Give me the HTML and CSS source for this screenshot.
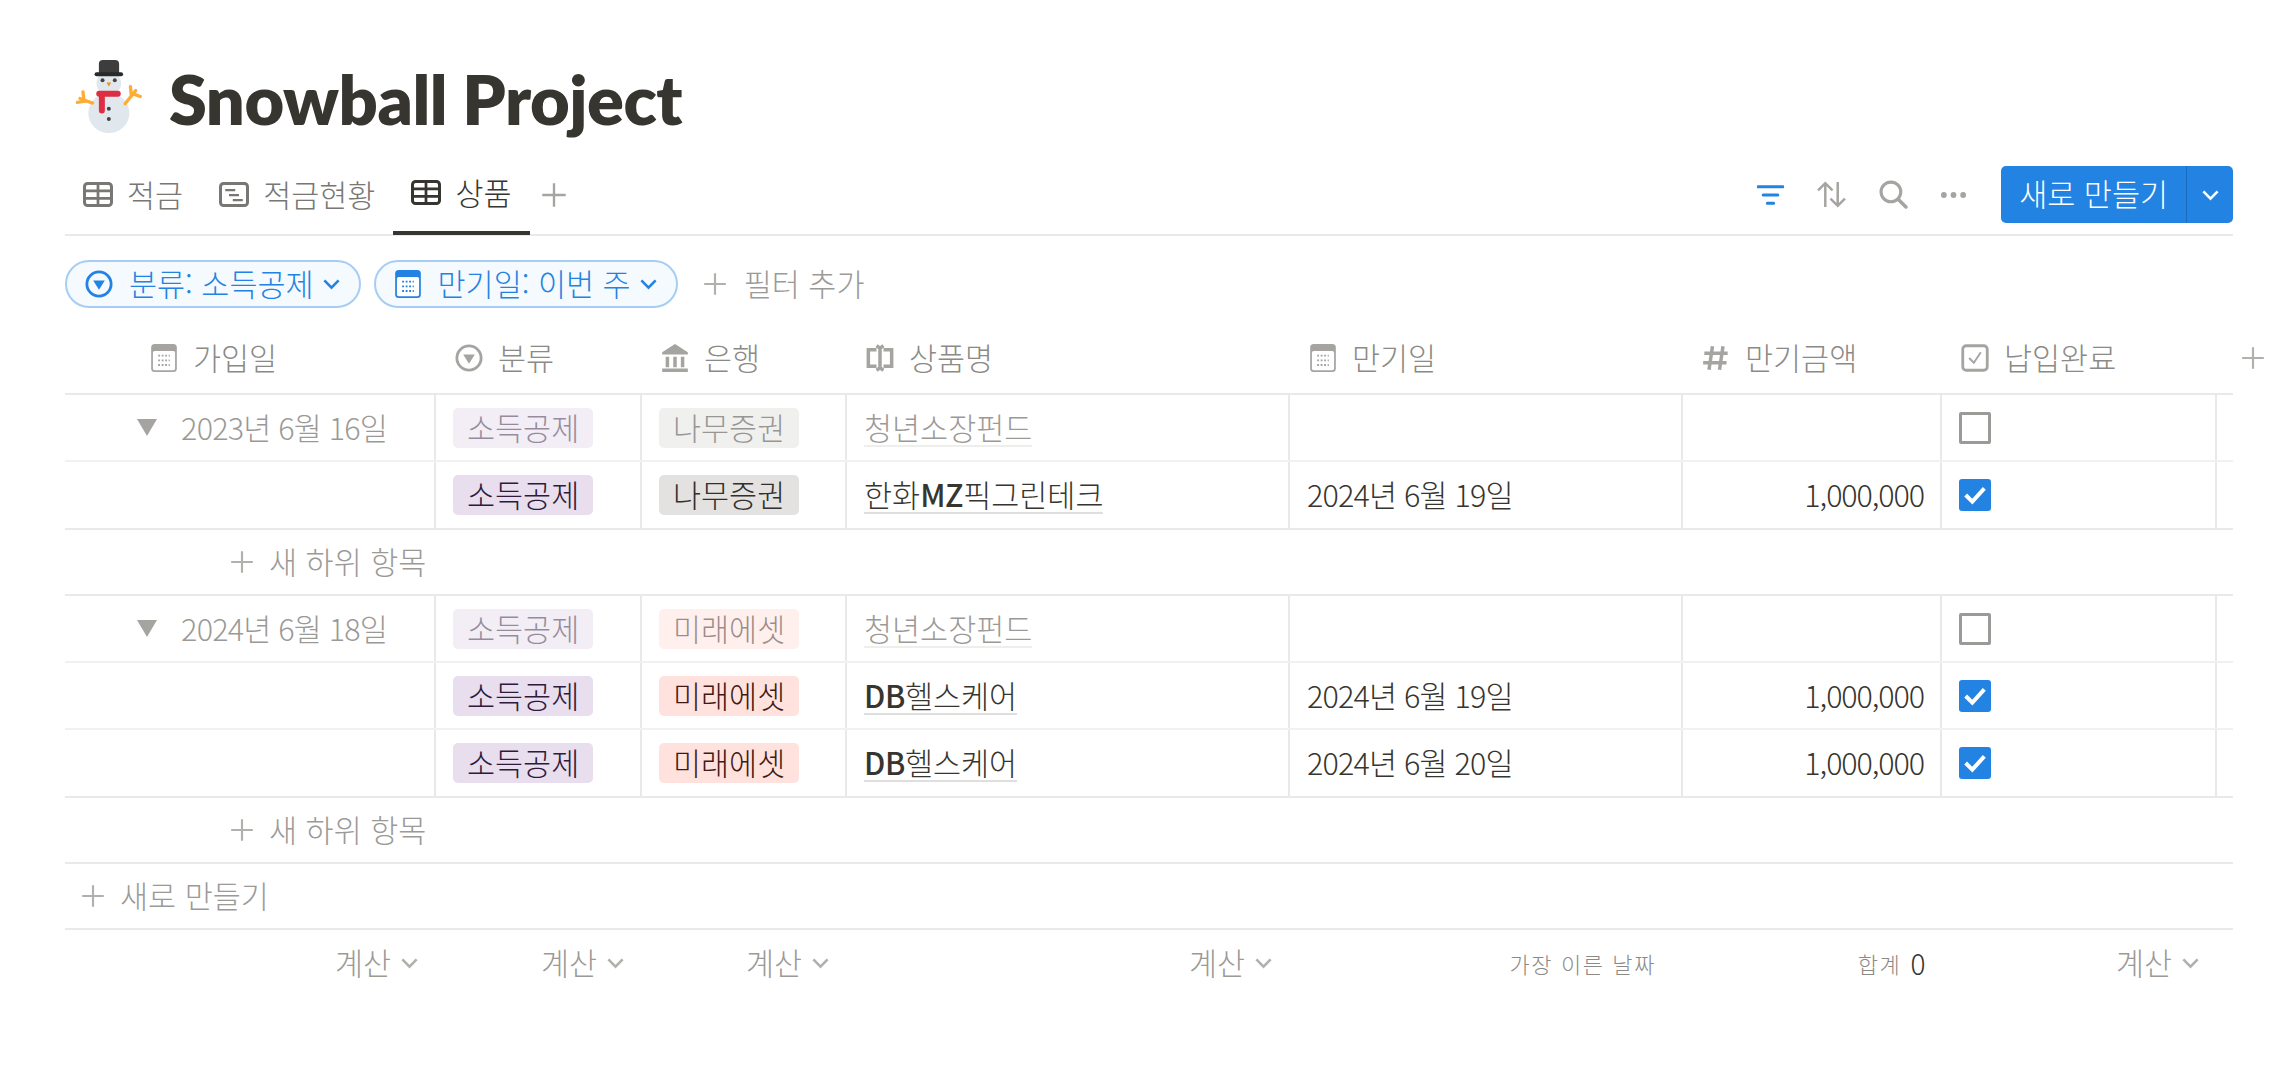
FILE: index.html
```html
<!DOCTYPE html>
<html lang="ko">
    <head>
        <meta charset="UTF-8">
        <title>Snowball Project</title>
        <link rel="stylesheet" href="styles.css">
    </head>

    <body>
        <svg class="defs" width="0" height="0">
            <symbol id="i-table" viewBox="0 0 24 20"><rect x="1.200" y="1.200" width="21.600" height="17.600" rx="2.500" fill="none" stroke="currentColor" stroke-width="2.400"/><path d="M1 7h22M1 13h22M12 1v18" stroke="currentColor" stroke-width="2.200"/></symbol>
            <symbol id="i-cal" viewBox="0 0 22 24"><rect width="22" height="24" rx="3" fill="currentColor"/><rect x="1.500" y="6" width="19" height="16.500" rx="1.500" fill="#fff"/><path d="M6 10h10M6 14h10M6 18h10" stroke="currentColor" stroke-width="1.600" stroke-dasharray="1.600 1.400"/></symbol>
            <symbol id="i-select" viewBox="0 0 24 24"><circle cx="12" cy="12" r="10.400" fill="none" stroke="currentColor" stroke-width="2.400"/><path d="M7 9h10l-5 8z" fill="currentColor"/></symbol>
            <symbol id="i-chev" viewBox="0 0 16 10"><path d="M2 2l6 6 6-6" fill="none" stroke="currentColor" stroke-width="2.200"/></symbol>
            <symbol id="i-plus" viewBox="0 0 20 20"><path d="M10 1v18M1 10h18" stroke="currentColor" stroke-width="1.800"/></symbol>
        </svg>

        <h1 class="title">
            <!-- snowman -->
            <svg class="snowman" viewBox="45 25 205 230">
                <ellipse cx="147" cy="190" rx="62" ry="60" fill="#e1e8ed"/>
                <circle cx="147" cy="100" r="37" fill="#e1e8ed"/>
                <path d="M117 72V42a12 12 0 0 1 12-12h37a12 12 0 0 1 12 12v30z" fill="#3d3d3d"/>
                <rect x="104" y="67" width="86" height="12" rx="6" fill="#292929"/>
                <circle cx="128" cy="91" r="6" fill="#444"/><circle cx="165" cy="91" r="6" fill="#444"/>
                <path d="M140 98h14l-7 12z" fill="#f4900c"/>
                <path d="M118 132h56M126 132v50" fill="none" stroke="#dd2e44" stroke-width="18" stroke-linecap="round"/>
                <circle cx="147" cy="177" r="6" fill="#444"/><circle cx="147" cy="208" r="6" fill="#444"/>
                <path d="M98 160L60 146M72 150l-3-24M80 153l-28 5M196 162l32-40M215 138l-3-28M220 132l22 8" fill="none" stroke="#ffac33" stroke-width="10" stroke-linecap="round"/>
            </svg>
            <span class="title-text">Snowball Project</span>
        </h1>

        <div class="tabbar">
            <div class="tab"><svg class="tab-icon"><use href="#i-table"/></svg>적금</div>
            <div class="tab">
                <svg class="tab-icon" viewBox="0 0 24 20"><rect x="1.200" y="1.200" width="21.600" height="17.600" rx="2.500" fill="none" stroke="currentColor" stroke-width="2.400"/><path d="M5 6.500h8M8 10.500h8M11 14.500h8" stroke="currentColor" stroke-width="1.800"/></svg>적금현황
            </div>
            <div class="tab tab-active"><svg class="tab-icon"><use href="#i-table"/></svg>상품</div>
            <svg class="tab-plus"><use href="#i-plus"/></svg>

            <div class="tools">
                <svg class="tool" viewBox="0 0 26 22"><path d="M1 3h24M6 11h14M10 19h6" stroke="#2383e2" stroke-width="3" stroke-linecap="round"/></svg>
                <svg class="tool tool-sort" viewBox="0 0 30 26"><path d="M9 25V2M2 9l7-7 7 7M21 1v23M14 17l7 7 7-7" fill="none" stroke="#a5a4a1" stroke-width="2.400"/></svg>
                <svg class="tool tool-search" viewBox="0 0 28 28"><circle cx="11.500" cy="11.500" r="9.500" fill="none" stroke="#a5a4a1" stroke-width="3"/><path d="M18.500 18.500L26 26" stroke="#a5a4a1" stroke-width="3.400" stroke-linecap="round"/></svg>
                <svg class="tool" viewBox="0 0 28 8"><circle cx="4" cy="4" r="3" fill="#a5a4a1"/><circle cx="14" cy="4" r="3" fill="#a5a4a1"/><circle cx="24" cy="4" r="3" fill="#a5a4a1"/></svg>
            </div>
            <div class="new-btn">
                <span class="new-label">새로 만들기</span>
                <span class="new-arrow"><svg class="chev"><use href="#i-chev"/></svg></span>
            </div>
        </div>

        <div class="filters">
            <div class="pill"><svg class="pill-icon"><use href="#i-select"/></svg>분류: 소득공제<svg class="chev"><use href="#i-chev"/></svg></div>
            <div class="pill"><svg class="pill-icon"><use href="#i-cal"/></svg>만기일: 이번 주<svg class="chev"><use href="#i-chev"/></svg></div>
            <div class="add-filter"><svg class="plus"><use href="#i-plus"/></svg>필터 추가</div>
        </div>

        <div class="row head">
            <div class="th th-first"><svg class="th-icon"><use href="#i-cal"/></svg>가입일</div>
            <div class="th"><svg class="th-icon"><use href="#i-select"/></svg>분류</div>
            <div class="th">
                <svg class="th-icon" viewBox="0 0 24 24"><path d="M12 0l11 7v2H1V7z" fill="currentColor"/><path d="M4 11h3v9H4zM10.500 11h3v9h-3zM17 11h3v9h-3zM1 21h22v3H1z" fill="currentColor"/></svg>은행
            </div>
            <div class="th">
                <svg class="th-icon" viewBox="0 0 24 24"><path d="M9 5H2v14h7M15 5h7v14h-7M12 2v20M9 1.500l3 2 3-2M9 22.500l3-2 3 2" fill="none" stroke="currentColor" stroke-width="3"/></svg>상품명
            </div>
            <div class="th"><svg class="th-icon"><use href="#i-cal"/></svg>만기일</div>
            <div class="th">
                <svg class="th-icon" viewBox="0 0 24 24"><path d="M9 2L6 22M18 2l-3 20M2 8h20M1 16h20" fill="none" stroke="currentColor" stroke-width="3"/></svg>만기금액
            </div>
            <div class="th">
                <svg class="th-icon" viewBox="0 0 24 24"><rect x="1.500" y="1.500" width="21" height="21" rx="3" fill="none" stroke="currentColor" stroke-width="2.400"/><path d="M7 12l4 4 6-9" fill="none" stroke="currentColor" stroke-width="1.600"/></svg>납입완료
            </div>
            <div class="th th-add"><svg class="plus"><use href="#i-plus"/></svg></div>
        </div>

        <!-- group 1 -->
        <div class="row parent">
            <div class="td td-first"><span class="tri"></span><span class="date dim">2023년 6월 16일</span></div>
            <div class="td"><span class="tag purple dim">소득공제</span></div>
            <div class="td"><span class="tag gray dim">나무증권</span></div>
            <div class="td"><span class="name dim">청년소장펀드</span></div>
            <div class="td"></div>
            <div class="td"></div>
            <div class="td"><span class="box"></span></div>
            <div></div>
        </div>
        <div class="row child last">
            <div class="td"></div>
            <div class="td"><span class="tag purple">소득공제</span></div>
            <div class="td"><span class="tag gray">나무증권</span></div>
            <div class="td"><span class="name">한화<b>MZ</b>픽그린테크</span></div>
            <div class="td"><span class="date">2024년 6월 19일</span></div>
            <div class="td td-num">1,000,000</div>
            <div class="td"><span class="box on"><svg viewBox="0 0 24 24"><path d="M5 12l5 5 9-10" fill="none" stroke="#fff" stroke-width="3"/></svg></span></div>
            <div></div>
        </div>
        <div class="line-row sub"><svg class="plus"><use href="#i-plus"/></svg>새 하위 항목</div>

        <!-- group 2 -->
        <div class="row parent">
            <div class="td td-first"><span class="tri"></span><span class="date dim">2024년 6월 18일</span></div>
            <div class="td"><span class="tag purple dim">소득공제</span></div>
            <div class="td"><span class="tag red dim">미래에셋</span></div>
            <div class="td"><span class="name dim">청년소장펀드</span></div>
            <div class="td"></div>
            <div class="td"></div>
            <div class="td"><span class="box"></span></div>
            <div></div>
        </div>
        <div class="row child">
            <div class="td"></div>
            <div class="td"><span class="tag purple">소득공제</span></div>
            <div class="td"><span class="tag red">미래에셋</span></div>
            <div class="td"><span class="name"><b>DB</b>헬스케어</span></div>
            <div class="td"><span class="date">2024년 6월 19일</span></div>
            <div class="td td-num">1,000,000</div>
            <div class="td"><span class="box on"><svg viewBox="0 0 24 24"><path d="M5 12l5 5 9-10" fill="none" stroke="#fff" stroke-width="3"/></svg></span></div>
            <div></div>
        </div>
        <div class="row child last">
            <div class="td"></div>
            <div class="td"><span class="tag purple">소득공제</span></div>
            <div class="td"><span class="tag red">미래에셋</span></div>
            <div class="td"><span class="name"><b>DB</b>헬스케어</span></div>
            <div class="td"><span class="date">2024년 6월 20일</span></div>
            <div class="td td-num">1,000,000</div>
            <div class="td"><span class="box on"><svg viewBox="0 0 24 24"><path d="M5 12l5 5 9-10" fill="none" stroke="#fff" stroke-width="3"/></svg></span></div>
            <div></div>
        </div>
        <div class="line-row sub"><svg class="plus"><use href="#i-plus"/></svg>새 하위 항목</div>
        <div class="line-row add-row"><svg class="plus"><use href="#i-plus"/></svg>새로 만들기</div>

        <div class="row calc">
            <div class="ft">계산<svg class="chev-sm"><use href="#i-chev"/></svg></div>
            <div class="ft">계산<svg class="chev-sm"><use href="#i-chev"/></svg></div>
            <div class="ft">계산<svg class="chev-sm"><use href="#i-chev"/></svg></div>
            <div class="ft">계산<svg class="chev-sm"><use href="#i-chev"/></svg></div>
            <div class="ft ft-small ft-date">가장 이른 날짜</div>
            <div class="ft ft-small">합계<span class="ft-val">0</span></div>
            <div class="ft">계산<svg class="chev-sm"><use href="#i-chev"/></svg></div>
            <div></div>
        </div>
    </body>
</html>
```

FILE: styles.css
```css
* {
    box-sizing: border-box;
    margin: 0;
    padding: 0;
}
body {
    padding: 0 49px 0 65px;
    background-color: #fff;
    color: #37352f;
    font-family: "Noto Sans CJK KR", "Noto Sans", sans-serif;
    font-size: 30.500px;
    font-weight: 300;
    line-height: 1.3;
    overflow: hidden;
}
.defs {
    position: absolute;
}
.title {
    display: flex;
    align-items: center;
    gap: 26px;
    height: 166px;
    padding: 46px 0 20px 10px;
    font-family: "Lato", "Noto Sans", sans-serif;
    font-size: 68.500px;
    font-weight: 800;
    letter-spacing: -0.5px;
}
.title-text {
    padding-top: 6px;
}
.snowman {
    width: 68px;
    height: 77px;
}

/* tabs */
.tabbar {
    display: flex;
    align-items: center;
    height: 70px;
    border-bottom: 2px solid #e9e9e7;
    color: #787774;
}
.tab {
    display: flex;
    align-items: center;
    gap: 14px;
    height: 70px;
    padding: 0 18px 11px;
    white-space: nowrap;
}
.tab-icon {
    width: 30px;
    height: 25px;
}
.tab-active {
    border-bottom: 4px solid #37352f;
    color: #37352f;
}
.tab-plus {
    width: 26px;
    height: 26px;
    margin: 0 0 11px 11px;
    color: #a5a4a1;
}
.tools {
    display: flex;
    align-items: center;
    gap: 32px;
    margin: 0 34px 11px auto;
}
.tool {
    width: 27px;
    height: 26px;
}
.tool-sort {
    width: 31px;
    height: 29px;
}
.tool-search {
    width: 29px;
    height: 29px;
}
.new-btn {
    display: flex;
    height: 57px;
    margin-bottom: 11px;
    border-radius: 5px;
    background-color: #2383e2;
    color: #fff;
    line-height: 55px;
    white-space: nowrap;
}
.new-label {
    padding: 0 18px;
    border-right: 1px solid #1b6cc0;
}
.new-arrow {
    display: flex;
    align-items: center;
    justify-content: center;
    width: 46px;
}
.chev {
    width: 19px;
    height: 12px;
}

/* filters */
.filters {
    display: flex;
    align-items: center;
    gap: 13px;
    height: 87px;
    padding-top: 9px;
}
.pill {
    display: flex;
    align-items: center;
    height: 48px;
    padding: 0 18px;
    border: 2px solid #a7cdf3;
    border-radius: 24px;
    background-color: #f5faff;
    color: #2383e2;
    white-space: nowrap;
}
.pill-icon {
    width: 28px;
    height: 28px;
    margin-right: 16px;
}
.pill .chev {
    margin-left: 8px;
}
.add-filter {
    display: flex;
    align-items: center;
    gap: 17px;
    margin-left: 12px;
    color: #9b9a97;
    white-space: nowrap;
}
.plus {
    width: 24px;
    height: 24px;
    color: #b1b0ad;
    flex-shrink: 0;
}

/* table */
.row {
    display: grid;
    grid-template-columns: 371px 206px 205px 443px 393px 259px 275px 16px;
}
.head {
    height: 72px;
    border-bottom: 2px solid #e9e9e7;
    color: #8b8a86;
}
.th {
    display: flex;
    align-items: center;
    gap: 15px;
    padding-left: 19px;
    white-space: nowrap;
}
.th-first {
    padding-left: 85px;
}
.th-add {
    padding-left: 24px;
}
.th-icon {
    width: 28px;
    height: 28px;
    color: #a5a4a1;
}
.parent, .child {
    height: 67px;
    border-bottom: 2px solid #f1f1ef;
}
.child.last {
    height: 68px;
    border-bottom-color: #e9e9e7;
}
.td {
    display: flex;
    align-items: center;
    padding: 0 17px;
    border-right: 2px solid #e9e9e7;
    white-space: nowrap;
}
.td-first {
    justify-content: flex-end;
    gap: 24px;
    padding-right: 47px;
}
.td-num {
    justify-content: flex-end;
    padding-right: 16px;
    letter-spacing: -1.100px;
}
.date {
    letter-spacing: -0.800px;
}
.tri {
    width: 0;
    height: 0;
    border-left: 10px solid transparent;
    border-right: 10px solid transparent;
    border-top: 17px solid #a5a4a1;
}
.dim {
    opacity: 0.5;
}
.tag {
    padding: 0 14px;
    height: 40px;
    line-height: 38px;
    border-radius: 5px;
    color: #2f1a3d;
}
.purple {
    background-color: #e8deee;
}
.gray {
    background-color: #e3e2e0;
    color: #32302c;
}
.red {
    background-color: #ffe2dd;
    color: #3f1a14;
}
.name {
    border-bottom: 2px solid #dfdfdd;
    line-height: 36px;
}
.name b {
    font-weight: 500;
    letter-spacing: -0.400px;
}
.box {
    display: block;
    width: 32px;
    height: 32px;
    border: 3px solid #9b9a97;
    border-radius: 2px;
}
.box.on {
    border: none;
    border-radius: 3px;
    background-color: #2383e2;
}
.box svg {
    display: block;
    width: 32px;
    height: 32px;
}
.line-row {
    display: flex;
    align-items: center;
    gap: 15px;
    height: 66px;
    border-bottom: 2px solid #e9e9e7;
    color: #9b9a97;
}
.sub {
    padding-left: 165px;
}
.add-row {
    padding-left: 16px;
}
.calc {
    height: 66px;
    color: #9b9a97;
}
.ft {
    display: flex;
    align-items: center;
    justify-content: flex-end;
    gap: 9px;
    padding-right: 17px;
    white-space: nowrap;
}
.chev-sm {
    width: 19px;
    height: 12px;
    color: #b1b0ad;
}
.ft-small {
    font-size: 22px;
    color: #8b8a86;
    letter-spacing: 1.600px;
    padding-right: 15px;
}
.ft-date {
    padding-right: 27px;
}
.ft-val {
    font-size: 28px;
    color: #37352f;
}
```
